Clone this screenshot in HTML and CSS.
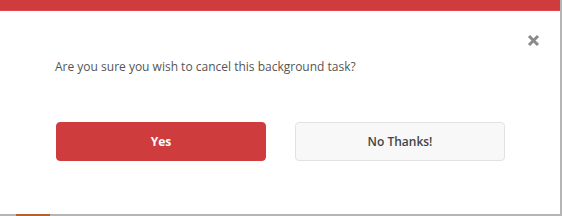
FILE: index.html
```html
<!DOCTYPE html>
<html>
<head>
<meta charset="utf-8">
<link rel="stylesheet" href="styles.css">
</head>
<body>
<div class="page">
  <div class="modal">
    <div class="topbar"></div>
    <div class="body">
      <div class="close-row">
        <button class="close" aria-label="Close">
          <svg width="13" height="13" viewBox="0 0 13 13"><path d="M2 2 L11 11 M11 2 L2 11" stroke="#8a8a8a" stroke-width="3" stroke-linecap="butt"/></svg>
        </button>
      </div>
      <p class="message">Are you sure you wish to cancel this background task?</p>
      <div class="actions">
        <button class="btn btn-yes">Yes</button>
        <button class="btn btn-no">No Thanks!</button>
      </div>
    </div>
  </div>
  <div class="bottom">
    <div class="tab"></div>
  </div>
</div>
</body>
</html>
```
FILE: styles.css
```css
html, body {
  margin: 0;
  padding: 0;
  background: #ffffff;
}
.page {
  width: 562px;
  height: 216px;
  display: flex;
  flex-direction: column;
  overflow: hidden;
}
.modal {
  flex: 1;
  width: 560px;
  border-right: 2px solid #b5b5b5;
  display: flex;
  flex-direction: column;
  background: #fff;
}
.topbar {
  height: 10px;
  background: #cf3c3e;
  border-bottom: 1px solid #e4474a;
}
.body {
  padding: 0 0 0 55px;
  display: flex;
  flex-direction: column;
}
.close-row {
  display: flex;
  justify-content: flex-end;
  padding: 23px 20px 0 0;
  height: 13px;
}
.close {
  border: 0;
  background: none;
  padding: 0;
  width: 13px;
  height: 13px;
  display: flex;
}
.message {
  margin: 12px 0 0 0;
  font-family: "Open Sans", sans-serif;
  font-size: 12px;
  color: #555555;
  line-height: 16px;
}
.actions {
  display: flex;
  gap: 29px;
  margin-top: 47px;
  padding-left: 1px;
}
.btn {
  width: 210px;
  height: 39px;
  border-radius: 4px;
  font-family: "Open Sans", sans-serif;
  font-size: 12px;
  cursor: pointer;
}
.btn-yes {
  background: #cf3c3e;
  border: 1px solid #cf3c3e;
  color: #ffffff;
  font-weight: 700;
}
.btn-no {
  background: #f8f8f8;
  border: 1px solid #e2e2e2;
  color: #444444;
  font-weight: 600;
}
.bottom {
  height: 2px;
  background: #b5b5b5;
  position: relative;
}
.tab {
  position: absolute;
  left: 16px;
  top: 0;
  width: 34px;
  height: 2px;
  background: #b5622f;
}
```
